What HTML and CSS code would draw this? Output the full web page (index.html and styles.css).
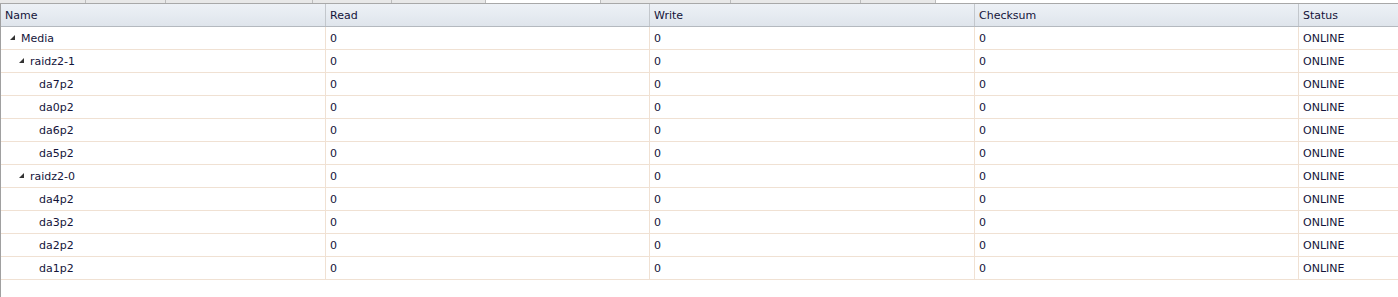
FILE: index.html
```html
<!DOCTYPE html>
<html>
<head>
<meta charset="utf-8">
<link rel="stylesheet" href="styles.css">
</head>
<body>
<div class="tabs">
  <div class="tab t1"></div>
  <div class="tab t2"></div>
  <div class="tab t3"></div>
  <div class="tab t4"></div>
  <div class="tab t5"></div>
  <div class="tab t6 active"></div>
  <div class="tab t7"></div>
  <div class="tab t8"></div>
  <div class="tab t9"></div>
  <div class="tab-rest"></div>
</div>
<div class="grid">
  <div class="row head">
    <div class="cell">Name</div>
    <div class="cell">Read</div>
    <div class="cell">Write</div>
    <div class="cell">Checksum</div>
    <div class="cell">Status</div>
  </div>

  <div class="row">
    <div class="cell tree l0"><span class="exp"><svg width="5" height="5" viewBox="0 0 5 5"><path d="M5 0V5H0Z"/></svg></span>Media</div>
    <div class="cell">0</div><div class="cell">0</div><div class="cell">0</div><div class="cell">ONLINE</div>
  </div>
  <div class="row">
    <div class="cell tree l1"><span class="exp"><svg width="5" height="5" viewBox="0 0 5 5"><path d="M5 0V5H0Z"/></svg></span>raidz2-1</div>
    <div class="cell">0</div><div class="cell">0</div><div class="cell">0</div><div class="cell">ONLINE</div>
  </div>
  <div class="row">
    <div class="cell tree l2"><span class="exp"></span>da7p2</div>
    <div class="cell">0</div><div class="cell">0</div><div class="cell">0</div><div class="cell">ONLINE</div>
  </div>
  <div class="row">
    <div class="cell tree l2"><span class="exp"></span>da0p2</div>
    <div class="cell">0</div><div class="cell">0</div><div class="cell">0</div><div class="cell">ONLINE</div>
  </div>
  <div class="row">
    <div class="cell tree l2"><span class="exp"></span>da6p2</div>
    <div class="cell">0</div><div class="cell">0</div><div class="cell">0</div><div class="cell">ONLINE</div>
  </div>
  <div class="row">
    <div class="cell tree l2"><span class="exp"></span>da5p2</div>
    <div class="cell">0</div><div class="cell">0</div><div class="cell">0</div><div class="cell">ONLINE</div>
  </div>
  <div class="row">
    <div class="cell tree l1"><span class="exp"><svg width="5" height="5" viewBox="0 0 5 5"><path d="M5 0V5H0Z"/></svg></span>raidz2-0</div>
    <div class="cell">0</div><div class="cell">0</div><div class="cell">0</div><div class="cell">ONLINE</div>
  </div>
  <div class="row">
    <div class="cell tree l2"><span class="exp"></span>da4p2</div>
    <div class="cell">0</div><div class="cell">0</div><div class="cell">0</div><div class="cell">ONLINE</div>
  </div>
  <div class="row">
    <div class="cell tree l2"><span class="exp"></span>da3p2</div>
    <div class="cell">0</div><div class="cell">0</div><div class="cell">0</div><div class="cell">ONLINE</div>
  </div>
  <div class="row">
    <div class="cell tree l2"><span class="exp"></span>da2p2</div>
    <div class="cell">0</div><div class="cell">0</div><div class="cell">0</div><div class="cell">ONLINE</div>
  </div>
  <div class="row">
    <div class="cell tree l2"><span class="exp"></span>da1p2</div>
    <div class="cell">0</div><div class="cell">0</div><div class="cell">0</div><div class="cell">ONLINE</div>
  </div>
</div>
</body>
</html>
```
FILE: styles.css
```css
html, body {
  margin: 0;
  padding: 0;
  background: #ffffff;
  height: 100%;
  overflow: hidden;
}
body {
  font-family: "DejaVu Sans", Verdana, sans-serif;
  font-size: 11px;
  color: #14143a;
}
.tabs {
  display: flex;
  height: 3px;
  border-bottom: 1px solid #a8a8a8;
}
.tab {
  background: #e8e8e8;
  border-right: 1px solid #bdbdbd;
  box-sizing: border-box;
  flex: none;
}
.tab.active { background: #ffffff; }
.t1 { width: 86px; }
.t2 { width: 80px; }
.t3 { width: 147px; }
.t4 { width: 79px; }
.t5 { width: 94px; }
.t6 { width: 115px; }
.t7 { width: 130px; }
.t8 { width: 130px; }
.t9 { width: 75px; }
.tab-rest { flex: 1; background: #ffffff; }

.grid {
  border-left: 1px solid #a0a0a0;
  height: calc(100% - 4px);
  box-sizing: border-box;
}
.row {
  display: grid;
  grid-template-columns: 324px 324px 325px 324px 1fr;
  height: 23px;
  box-sizing: border-box;
  border-bottom: 1px solid #f0e1d3;
}
.cell {
  height: 22px;
  box-sizing: border-box;
  line-height: 22px;
  padding-top: 1px;
  padding-left: 4px;
  white-space: nowrap;
  overflow: hidden;
  border-left: 1px solid #f0e1d3;
}
.cell:first-child { border-left: none; padding-left: 4px; }
.head {
  background: linear-gradient(#edf1f6, #dfe5ec);
  border-bottom: 1px solid #b4b9bf;
}
.head .cell { border-left-color: #c3c7cc; }

.tree {
  display: flex;
  align-items: flex-start;
}
.exp {
  width: 11px;
  height: 22px;
  flex: none;
  display: flex;
  align-items: center;
}
.exp svg { display: block; fill: #333333; margin-top: -3px; }
.tree.l0 { padding-left: 9px; }
.tree.l1 { padding-left: 18px; }
.tree.l2 { padding-left: 27px; }
```
